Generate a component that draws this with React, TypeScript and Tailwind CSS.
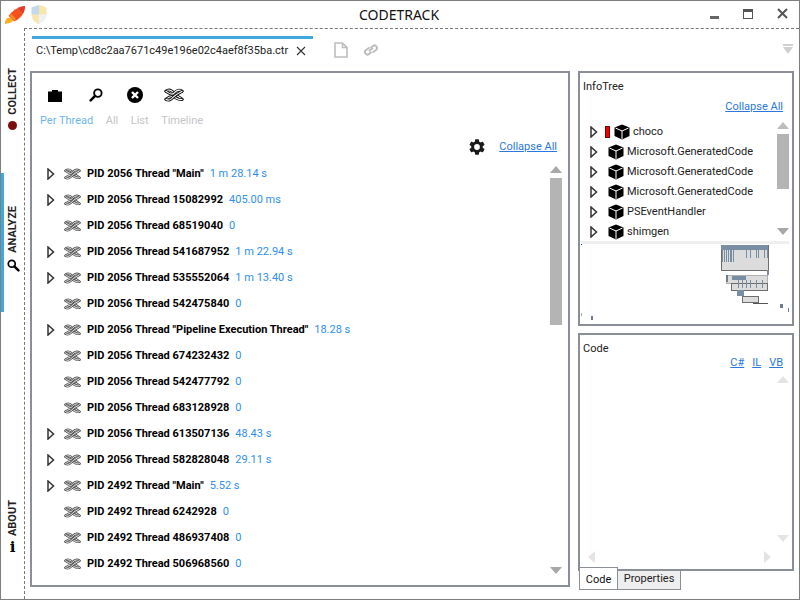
import React from "react";

const threads: [string, string, boolean][] = [
  ['PID 2056 Thread "Main"', "1 m 28.14 s", true],
  ["PID 2056 Thread 15082992", "405.00 ms", true],
  ["PID 2056 Thread 68519040", "0", false],
  ["PID 2056 Thread 541687952", "1 m 22.94 s", true],
  ["PID 2056 Thread 535552064", "1 m 13.40 s", true],
  ["PID 2056 Thread 542475840", "0", false],
  ['PID 2056 Thread "Pipeline Execution Thread"', "18.28 s", true],
  ["PID 2056 Thread 674232432", "0", false],
  ["PID 2056 Thread 542477792", "0", false],
  ["PID 2056 Thread 683128928", "0", false],
  ["PID 2056 Thread 613507136", "48.43 s", true],
  ["PID 2056 Thread 582828048", "29.11 s", true],
  ['PID 2492 Thread "Main"', "5.52 s", true],
  ["PID 2492 Thread 6242928", "0", false],
  ["PID 2492 Thread 486937408", "0", false],
  ["PID 2492 Thread 506968560", "0", false],
];

function Rope({ color = "#333", w = 20, h = 14 }: { color?: string; w?: number; h?: number }) {
  const strands = [
    "M2 3 C5 0.500 8 2 10.500 5 C13 8 16 9 19 11.500",
    "M2 11.500 C5 9 8 8 10.500 9 C13 10 16 13 19 11.500",
    "M2 3 C5 5 8 8 10.500 5 C13 2 16 1 19 3",
    "M2 11.500 C5 13.500 7 12 10 9 C13 6 16 5 19 3",
  ];
  return (
    <svg width={w} height={h} viewBox="0 0 21 14" fill="none" className="block">
      {strands.map((d, i) => (
        <g key={i}>
          <path d={d} stroke={color} strokeWidth="3" strokeLinecap="round" />
          <path d={d} stroke="#fff" strokeWidth="1.100" strokeLinecap="round" />
        </g>
      ))}
    </svg>
  );
}

function Tri() {
  return (
    <svg width="8" height="12" viewBox="0 0 8 12" className="block">
      <path d="M1 1 L6.500 6 L1 11 Z" fill="#fff" stroke="#333" strokeWidth="1.500" />
    </svg>
  );
}

function Cube({ size = 16 }: { size?: number }) {
  return (
    <svg width={size} height={size} viewBox="0 0 16 16" className="block shrink-0">
      <path d="M8 0.500 L15.500 3.500 V12 L8 15.500 L0.500 12 V3.500 Z" fill="#000" />
      <path d="M1.500 4 L8 7 L14.500 4 M8 7 V15" stroke="#fff" strokeWidth="1" fill="none" />
    </svg>
  );
}

function Arrow({ dir, color = "#a8a8a8", w = 12 }: { dir: "up" | "down" | "left" | "right"; color?: string; w?: number }) {
  const d = { up: "M0 7 L6 0 L12 7 Z", down: "M0 0 L12 0 L6 7 Z", left: "M7 0 V12 L0 6 Z", right: "M0 0 V12 L7 6 Z" }[dir];
  const vertical = dir === "up" || dir === "down";
  return (
    <svg width={vertical ? w : 7} height={vertical ? 7 : 12} viewBox={vertical ? "0 0 12 7" : "0 0 7 12"} preserveAspectRatio="none" className="block">
      <path d={d} fill={color} />
    </svg>
  );
}

function Search({ size = 15, cls = "" }: { size?: number; cls?: string }) {
  return (
    <svg width={size} height={size} viewBox="0 0 15 15" fill="none" className={`block ${cls}`}>
      <circle cx="9.500" cy="5.500" r="4" stroke="#000" strokeWidth="2" />
      <path d="M6.500 8.500 L1.800 13.200" stroke="#000" strokeWidth="2.800" strokeLinecap="round" />
    </svg>
  );
}

function Gear() {
  return (
    <svg width="16" height="16" viewBox="2 2 20 20" className="block">
      <path fill="#1a1a1a" d="M19.140 12.940c.04-.3.06-.61.06-.94s-.02-.64-.07-.94l2.030-1.580a.49.49 0 0 0 .12-.61l-1.920-3.320a.49.49 0 0 0-.59-.22l-2.390.96a7 7 0 0 0-1.620-.94l-.36-2.540a.48.48 0 0 0-.48-.41h-3.840a.48.48 0 0 0-.47.41l-.36 2.540c-.59.24-1.130.57-1.620.94l-2.390-.96a.49.49 0 0 0-.59.22L2.740 8.870a.48.48 0 0 0 .12.61l2.030 1.580c-.05.3-.09.63-.09.94s.02.64.07.94l-2.030 1.580a.49.49 0 0 0-.12.61l1.920 3.320c.12.22.37.29.59.22l2.390-.96c.5.38 1.030.7 1.620.94l.36 2.540c.05.24.24.41.48.41h3.840c.24 0 .44-.17.47-.41l.36-2.540c.59-.24 1.130-.56 1.620-.94l2.390.96c.22.08.47 0 .59-.22l1.920-3.320a.48.48 0 0 0-.12-.61zM12 15.600A3.600 3.600 0 1 1 12 8.400a3.600 3.600 0 0 1 0 7.200z" />
    </svg>
  );
}

function Minimap() {
  const ticks1 = [2, 4, 6, 8, 10, 11, 13, 26, 30, 36, 38, 44, 47];
  const steel = "#7a8ea3";
  return (
    <svg width="212" height="77" viewBox="0 0 212 77" className="block" shapeRendering="crispEdges">
      <rect x="1" y="0" width="1" height="1" fill="#3030c0" />
      <g transform="translate(141 1)">
        <rect x="0.500" y="0.500" width="47" height="25" fill="#dcdcdc" stroke="#6e6e6e" />
        <rect x="0" y="0" width="47" height="5" fill={steel} />
        {ticks1.map((t) => <rect key={t} x={t - 1} y="3" width="1.200" height={t < 14 ? 14 : 10} fill={steel} />)}
        <rect x="46" y="25" width="1.500" height="5" fill={steel} />
      </g>
      <g transform="translate(146 31)">
        <rect x="0.500" y="0.500" width="41" height="8" fill="#dcdcdc" stroke="#b0b0b0" />
        <rect x="6" y="1" width="14" height="4" fill={steel} />
        <rect x="0" y="0" width="2" height="7" fill="#6e7d8c" />
        <rect x="5.500" y="8.500" width="36" height="7" fill="#dcdcdc" stroke="#6e6e6e" />
        {[12, 16, 20, 24, 30, 36].map((t) => <rect key={t} x={t} y="5" width="1" height="8" fill={steel} />)}
      </g>
      <g transform="translate(157 46)">
        <rect x="0" y="0" width="7" height="6" fill={steel} />
        <rect x="5.500" y="6.500" width="16" height="6" fill="#dcdcdc" stroke="#6e6e6e" />
        <rect x="16" y="13" width="15" height="1" fill="#555" />
      </g>
      <rect x="200" y="60" width="3" height="4" fill="#6e7d8c" />
      <rect x="208" y="64" width="1" height="4" fill="#6e7d8c" />
      <rect x="1" y="69" width="1" height="3" fill="#aaa" />
      <rect x="11" y="72" width="2" height="4" fill="#6e7d8c" />
    </svg>
  );
}

function SideItem({ label, icon, cls }: { label: string; icon: React.ReactNode; cls: string }) {
  return (
    <div className={`flex flex-col items-center ${cls}`}>
      <span className="[writing-mode:vertical-rl] rotate-180 text-[11px] leading-[14px] font-bold text-[#222]">{label}</span>
      {icon}
    </div>
  );
}

export default function App() {
  return (
    <div className="w-[800px] h-[600px] bg-white border border-[#7f7f7f] flex flex-col overflow-hidden text-[11px] text-black" style={{ fontFamily: "Roboto, sans-serif" }}>
      <div className="h-[27px] shrink-0 flex items-center relative">
        <svg width="22" height="20" viewBox="0 0 24 22" className="ml-[3px]">
          <path d="M6 14 C2 14 1 17 1 21 C6 20 10 19 10 16 Z" fill="#ffb020" />
          <path d="M5 12 C9 6 15 2 23 1 C23 9 18 15 11 18 Z" fill="#f4511e" />
          <path d="M15 3 C18 2 21 1 23 1 C23 3 22 7 21 9 Z" fill="#e53935" />
          <path d="M6 12 L11 17 L13 15 L8 10 Z" fill="#ff8a1e" />
        </svg>
        <svg width="18" height="21" viewBox="0 0 20 24" className="ml-[4px] opacity-50 mt-[-1px]">
          <path d="M10 1 L18.500 4 V12 C18.500 18 14 21 10 23 C6 21 1.500 18 1.500 12 V4 Z" fill="#dfe7ef" />
          <path d="M10 1 L18.500 4 V12 H10 Z" fill="#f2cf5b" />
          <path d="M10 12 H1.500 C1.500 18 6 21 10 23 Z" fill="#f2cf5b" />
          <path d="M10 1 L1.500 4 V12 H10 Z" fill="#8db4dc" />
        </svg>
        <div className="absolute left-[-2px] right-0 top-[6px] text-center text-[14px] leading-[16px] text-[#111]" style={{ fontFamily: "'Noto Sans', sans-serif" }}>CODETRACK</div>
        <div className="ml-auto flex items-center">
          <div className="w-[9px] h-[3px] bg-[#666] mt-[6px] mr-[24px]" />
          <div className="w-[10px] h-[10px] border border-[#555] border-t-[3px] mr-[24px] mt-[-2px]" />
          <svg width="11" height="11" viewBox="0 0 11 11" className="mr-[11px] mt-[-2px]"><path d="M1 1 L10 10 M10 1 L1 10" stroke="#555" strokeWidth="2" /></svg>
        </div>
      </div>

      <div className="flex-1 flex min-h-0">
        <div className="w-[23px] shrink-0 flex flex-col">
          <div className="h-[145px] flex flex-col">
            <SideItem label="COLLECT" cls="pt-[40px]" icon={<div className="w-[9px] h-[9px] rounded-full bg-[#7d0c0c] mt-[6px]" />} />
          </div>
          <div className="h-[139px] border-l-[3px] border-[#3fa9dc] flex flex-col">
            <SideItem label="ANALYZE" cls="pt-[33px] ml-[-2px]" icon={<div className="mt-[6px]"><Search size={13} cls="rotate-[-90deg]" /></div>} />
          </div>
          <div className="flex-1 flex flex-col justify-end pb-[45px]">
            <SideItem label="ABOUT" cls="" icon={<div className="text-[15px] leading-[13px] font-bold mt-[5px] [font-family:'DejaVu_Serif',serif]">i</div>} />
          </div>
        </div>

        <div className="flex-1 min-w-0 border-l border-t border-dashed border-[#777] flex flex-col">
          <div className="h-[42px] shrink-0 flex pl-[7px] pt-[7px]">
            <div className="w-[281px] h-[35px] border-t-[3px] border-[#3fa9dc] flex items-start pl-[4px] pt-[4px]">
              <span className="text-[11px] leading-[16px] text-[#222] whitespace-nowrap">C:\Temp\cd8c2aa7671c49e196e02c4aef8f35ba.ctr</span>
              <svg width="10" height="10" viewBox="0 0 10 10" className="ml-[8px] mt-[3px]"><path d="M1 1 L9 9 M9 1 L1 9" stroke="#333" strokeWidth="1.100" /></svg>
            </div>
            <svg width="14" height="16" viewBox="0 0 14 16" fill="none" className="ml-[21px] mt-[6px]"><path d="M1 1 H8.500 L13 5.500 V15 H1 Z M8.500 1 V5.500 H13" stroke="#bdbdbd" strokeWidth="1.600" /></svg>
            <svg width="16" height="14" viewBox="0 0 16 14" fill="none" className="ml-[15px] mt-[7px]"><path d="M6 8 L10 5 M6.500 4.500 L3 7 A2.500 2.500 0 0 0 6 11 L8.500 9 M9.500 9.500 L13 7 A2.500 2.500 0 0 0 10 3 L7.500 5" stroke="#bdbdbd" strokeWidth="2" /></svg>
            <div className="ml-auto mr-[6px] mt-[8px] flex flex-col gap-[1px] items-center">
              <div className="w-[10px] h-[2px] bg-[#d0d0d0]" />
              <Arrow dir="down" color="#d0d0d0" w={10} />
            </div>
          </div>

          <div className="flex-1 min-h-0 flex pl-[5px] pr-[5px] gap-[8px]">
            <div className="w-[540px] h-[516px] border-2 border-[#8a8e96] flex flex-col">
              <div className="h-[60px] shrink-0 flex flex-col pl-[8px] pt-[14px]">
                <div className="flex items-center h-[16px]">
                  <div className="ml-[8px] w-[14px]">
                    <svg width="14" height="14" viewBox="0 0 14 14" className="block"><path d="M4 2 H10 V3.500 H14 V14 H0 V3.500 H4 Z" fill="#000" /></svg>
                  </div>
                  <div className="ml-[27px]"><Search size={14} /></div>
                  <svg width="16" height="16" viewBox="0 0 16 16" className="ml-[24px]">
                    <circle cx="8" cy="8" r="8" fill="#000" />
                    <path d="M5 5 L11 11 M11 5 L5 11" stroke="#fff" strokeWidth="2.400" />
                  </svg>
                  <div className="ml-[21px]"><Rope color="#111" /></div>
                </div>
                <div className="flex mt-[10px] text-[11px] leading-[16px] gap-[12.5px] text-[#c4c4c8]">
                  <span className="text-[#6cb6ec]">Per Thread</span>
                  <span>All</span>
                  <span>List</span>
                  <span>Timeline</span>
                </div>
              </div>
              <div className="h-[28px] shrink-0 flex items-center justify-end pr-[11px]">
                <div className="mt-[-1px]"><Gear /></div>
                <a className="ml-[14px] text-[11px] leading-[14px] underline text-[#2a78e0]">Collapse All</a>
              </div>
              <div className="flex-1 min-h-0 flex">
                <div className="flex-1 min-w-0 flex flex-col">
                  {threads.map(([name, time, exp], i) => (
                    <div key={i} className="h-[26px] shrink-0 flex items-center pl-[15px]">
                      <div className="w-[17px]">{exp && <Tri />}</div>
                      <Rope color="#555" w={17} h={12} />
                      <span className="ml-[6px] text-[11px] font-bold text-black whitespace-nowrap">{name}</span>
                      <span className="ml-[6px] text-[11px] text-[#2f8fee] whitespace-nowrap">{time}</span>
                    </div>
                  ))}
                </div>
                <div className="w-[12px] mr-[6px] flex flex-col items-center pt-[5px]">
                  <Arrow dir="up" />
                  <div className="w-[12px] h-[147px] bg-[#b4b4b4] mt-[5px]" />
                  <div className="mt-auto mb-[11px]"><Arrow dir="down" /></div>
                </div>
              </div>
            </div>

            <div className="w-[216px] flex flex-col">
              <div className="h-[255px] border-2 border-[#8a8e96] flex flex-col overflow-hidden">
                <div className="pl-[3px] pt-[6px] text-[11px] leading-[16px] text-[#222]">InfoTree</div>
                <div className="text-right pr-[9px] mt-[5px] text-[11px] leading-[14px]"><a className="underline text-[#2a78e0]">Collapse All</a></div>
                <div className="flex mt-[8px] h-[120px]">
                  <div className="flex-1 min-w-0 flex flex-col pl-[10px]">
                    {["choco", "Microsoft.GeneratedCode", "Microsoft.GeneratedCode", "Microsoft.GeneratedCode", "PSEventHandler", "shimgen"].map((n, i) => (
                      <div key={i} className="h-[20px] flex items-center">
                        <div className={i === 0 ? "w-[15px]" : "w-[18px]"}><Tri /></div>
                        {i === 0 && <div className="w-[5px] h-[12px] bg-[#f00000] border border-[#700] mr-[4px]" />}
                        <Cube />
                        <span className="ml-[3px] text-[11px] text-[#222] whitespace-nowrap">{n}</span>
                      </div>
                    ))}
                  </div>
                  <div className="w-[12px] mr-[3px] flex flex-col items-center">
                    <Arrow dir="up" color="#bdbdbd" />
                    <div className="w-[12px] h-[55px] bg-[#b4b4b4] mt-[5px]" />
                    <div className="mt-[39px]"><Arrow dir="down" color="#a8a8a8" /></div>
                  </div>
                </div>
                <div className="ml-[1px] mr-[3px] mt-[-1px] h-[3px] shrink-0 bg-[#efefef]" />
                <Minimap />
              </div>
              <div className="h-[7px]" />
              <div className="h-[238px] border-2 border-[#8a8e96] flex flex-col relative">
                <div className="pl-[3px] pt-[6px] text-[11px] leading-[16px] text-[#222]">Code</div>
                <div className="flex justify-end gap-[8px] pr-[9px] text-[11px] leading-[14px] mt-[-1px]">
                  <a className="underline text-[#2a78e0]">C#</a>
                  <a className="underline text-[#2a78e0]">IL</a>
                  <a className="underline text-[#2a78e0]">VB</a>
                </div>
                <div className="flex-1 flex flex-col items-end pr-[3px] pt-[6px]">
                  <Arrow dir="up" color="#e4e4e4" />
                  <div className="mt-auto mb-[9px]"><Arrow dir="down" color="#e4e4e4" /></div>
                </div>
                <div className="h-[18px] flex justify-between pl-[8px] pr-[21px]">
                  <Arrow dir="left" color="#e4e4e4" />
                  <Arrow dir="right" color="#e4e4e4" />
                </div>
              </div>
              <div className="flex pl-[1px] items-start">
                <div className="w-[39px] h-[23px] mt-[-4px] relative bg-white border border-[#8a8e96] flex items-center justify-center pt-[3px] text-[11px] text-[#111]">Code</div>
                <div className="w-[64px] h-[19px] bg-[#eeeeee] border border-[#8a8e96] border-t-0 ml-[-1px] flex items-center justify-center pb-[1px] text-[11px] text-[#222]">Properties</div>
              </div>
            </div>
          </div>
        </div>
      </div>
    </div>
  );
}
